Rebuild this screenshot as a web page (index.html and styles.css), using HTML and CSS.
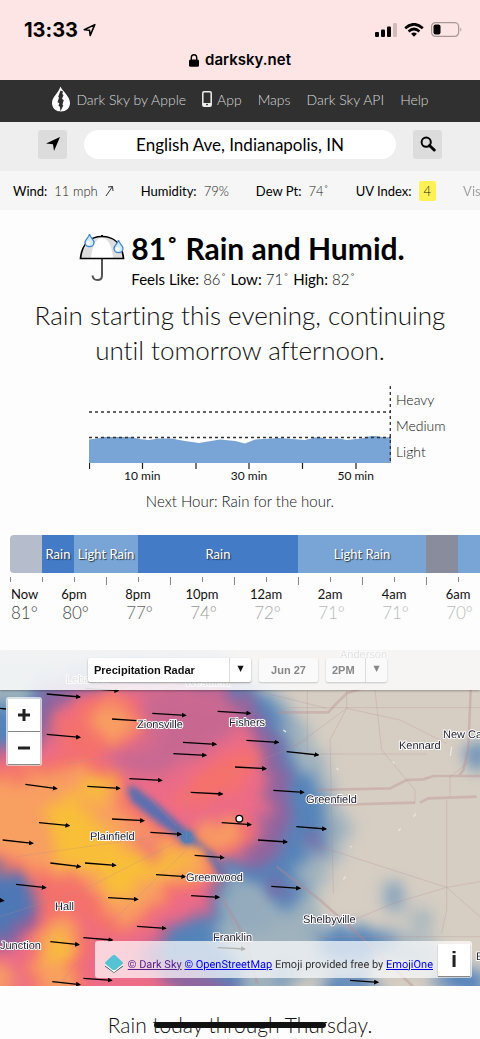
FILE: index.html
```html
<!DOCTYPE html>
<html lang="en">
<head>
<meta charset="utf-8">
<meta name="viewport" content="width=device-width, initial-scale=1">
<title>Dark Sky - English Ave, Indianapolis, IN</title>
<link rel="stylesheet" href="styles.css">
</head>
<body>
<header class="phone">
  <div class="status">
    <div class="clock"><span>13:33</span>
      <svg width="13" height="14" viewBox="0 0 13 14"><path d="M1.2 6.7 11.8 1.6 7.2 12.4 6.5 7.2Z" fill="none" stroke="#000" stroke-width="1.6" stroke-linejoin="round"/></svg>
    </div>
    <div class="signals">
      <svg width="22" height="14" viewBox="0 0 22 14"><rect y="9" width="4" height="5" rx="1"/><rect x="6" y="6.500" width="4" height="7.500" rx="1"/><rect x="12" y="3.500" width="4" height="10.500" rx="1"/><rect x="18" width="4" height="14" rx="1" fill="#d0bcbc"/></svg>
      <svg width="20" height="14" viewBox="0 0 20 14"><g fill="none" stroke="#000" stroke-width="2.700"><path d="M1.200 5.200Q10-2.600 18.800 5.200"/><path d="M4.600 8.400Q10 3.600 15.400 8.400"/></g><path d="M7.100 10.700Q10 8.400 12.900 10.700L10 13.700Z"/></svg>
      <svg width="31" height="15" viewBox="0 0 31 15"><rect x=".6" y=".6" width="27" height="13.800" rx="4" fill="none" stroke="#a79898" stroke-width="1.200"/><rect x="2.500" y="2.500" width="7" height="10" rx="2"/><path d="M29.300 5.200q2 2.300 0 4.600Z" fill="#a79898"/></svg>
    </div>
  </div>
  <div class="address">
    <svg width="10" height="13" viewBox="0 0 10 13"><rect y="5.500" width="10" height="7.300" rx="1.500"/><path d="M2.300 6V3.700a2.700 2.900 0 0 1 5.400 0V6" fill="none" stroke="#000" stroke-width="1.400"/></svg>
    <span>darksky.net</span>
  </div>
</header>

<nav class="nav">
  <a href="#home"><svg width="20" height="26" viewBox="0 0 20 26"><path d="M9.500.5C11 5 19 10 19 17c0 5-4 8.500-9 8.500S1 22 1 17C1 11 7.500 7 9.500.500Z" fill="#fff"/><path d="M9.500 4.500 12 5.500 11.300 8 12.500 9 11 13 12.800 14 11.500 18.500 12.300 19.500 9.500 25.200 8.800 20.500 7.500 20 8.300 17 6.500 16.300 8 11.500 7.200 10.700Z" fill="#303030"/></svg>Dark Sky by Apple</a>
  <a href="#app"><svg width="10" height="16" viewBox="0 0 10 16"><rect x=".8" y=".8" width="8.400" height="14.400" rx="1.200" fill="none" stroke="#eee" stroke-width="1.500"/><path d="M1 12h8v3H1z" fill="#eee"/><circle cx="5" cy="13.600" r=".8"/></svg>App</a>
  <a href="#maps">Maps</a>
  <a href="#api">Dark Sky API</a>
  <a href="#help">Help</a>
</nav>

<form class="search">
  <button type="button" class="square" aria-label="Use my location"><svg width="16" height="16" viewBox="0 0 16 16"><path d="M1 7.500 15 1 9 15 8 8.200Z"/></svg></button>
  <input class="place" type="text" aria-label="Location" value="English Ave, Indianapolis, IN">
  <button type="button" class="square" aria-label="Search"><svg width="16" height="16" viewBox="0 0 16 16"><circle cx="6.200" cy="6.200" r="4.600" fill="none" stroke="#000" stroke-width="2"/><path d="m9.500 9.500 4.700 4.500" stroke="#000" stroke-width="3" stroke-linecap="round"/></svg></button>
</form>

<div class="conditions">
  <div><b>Wind:</b><span>11 mph</span><svg width="9" height="12" viewBox="0 0 9 12"><path d="M1 11 7.500 1.500M3 2l4.500-.5L8 6" fill="none" stroke="#333"/></svg></div>
  <div><b>Humidity:</b><span>79%</span></div>
  <div><b>Dew Pt:</b><span>74˚</span></div>
  <div><b>UV Index:</b><span class="uv">4</span></div>
  <div class="faded"><b>Visibility:</b></div>
</div>

<main>
  <section class="current">
    <svg width="46" height="50" viewBox="0 0 46 50">
      <path d="M23 25v17.500q0 4.500-4.500 4.500T13.500 42.500" fill="none" stroke="#555" stroke-width="2"/>
      <path d="M1.500 25.500C3 11 11 3.500 23 3.500s20 7.500 21.500 22Z" fill="#dedede"/>
      <path d="M12 25.500C13 13 17 5 23 5s10 8 11 20.500Z" fill="#fff"/>
      <path d="M1.500 25.500C3 11 11 3.500 23 3.500s20 7.500 21.500 22Z" fill="none" stroke="#000" stroke-width="1.700"/>
      <path d="M23 4V2" stroke="#000" stroke-width="2"/>
      <g fill="#d4eafc" stroke="#3d86cc" stroke-width="1.300"><path d="M10.500 1c.7 4 4.500 5.500 4.500 8.500a4.500 4.200 0 0 1-9 0C6 6.500 9.800 5 10.500 1Z"/><path d="M39.500 7c.7 4 4.500 5.500 4.500 8.500a4.500 4.200 0 0 1-9 0c0-3 3.800-4.500 4.500-8.500Z"/></g>
      <g fill="#fff"><circle cx="9.500" cy="10" r="2"/><circle cx="38.500" cy="16" r="2"/></g>
    </svg>
    <div>
      <h1>81˚ Rain and Humid.</h1>
      <p class="feels"><span><b>Feels Like:</b> 86˚</span><span><b>Low:</b> 71˚</span><span><b>High:</b> 82˚</span></p>
    </div>
  </section>
  <p class="outlook">Rain starting this evening, continuing until tomorrow afternoon.</p>

  <section class="hour">
    <div class="chart">
      <svg class="plot" viewBox="0 0 302 84" preserveAspectRatio="none">
        <path d="M0 77V53.500L8 52.500 14 51H42L50 53 60 54 70 52.500H82L96 55 110 57 122 55 131 53.500 146 55 156 57.500 166 53.500 190 52 216 54 226 51.500H232L238 53 250 52.500 258 54 272 52.500 282 50H287L296 51.500 302 51V77Z" fill="#78a4d6"/>
        <g fill="none" stroke="#333" stroke-width="1.300" stroke-dasharray="3 3"><path d="M0 26h302M0 51.500h302"/><path d="M301.300 0v77"/></g>
        <path d="M.5 77v6M53.500 77v6M107 77v6M160 77v6M213.500 77v6M267 77v6" stroke="#222" stroke-width="1.200"/>
      </svg>
      <div class="levels"><span>Heavy</span><span>Medium</span><span>Light</span></div>
      <div class="minutes"><span>10 min</span><span>30 min</span><span>50 min</span></div>
    </div>
    <p class="next">Next Hour: Rain for the hour.</p>
  </section>

  <section class="timeline">
    <div class="bands">
      <span class="cloudy"></span><span class="rain">Rain</span><span class="light two">Light Rain</span><span class="rain five">Rain</span><span class="light four">Light Rain</span><span class="overcast"></span><span class="light two"></span>
    </div>
    <div class="ticks"><i></i><i></i><i></i><i class="long"></i><i></i><i class="long"></i><i></i><i class="long"></i><i></i><i class="long"></i><i></i><i class="long"></i><i></i><i class="long"></i><i></i></div>
    <div class="hours">
      <div class="now"><b>Now</b><span class="t81">81°</span></div>
      <div><b>6pm</b><span class="t81">80°</span></div>
      <div><b>8pm</b><span class="t77">77°</span></div>
      <div><b>10pm</b><span class="t74">74°</span></div>
      <div><b>12am</b><span class="t72">72°</span></div>
      <div><b>2am</b><span class="t71">71°</span></div>
      <div><b>4am</b><span class="t71">71°</span></div>
      <div><b>6am</b><span class="t71">70°</span></div>
    </div>
  </section>

  <section class="map">
    <svg class="canvas" viewBox="0 0 480 336" preserveAspectRatio="xMidYMid slice">
      <defs>
        <filter id="haze" x="-20%" y="-20%" width="140%" height="140%" color-interpolation-filters="sRGB"><feTurbulence type="fractalNoise" baseFrequency=".03" numOctaves="4" seed="4" result="n"/><feDisplacementMap in="SourceGraphic" in2="n" scale="80" xChannelSelector="R" yChannelSelector="G"/><feGaussianBlur stdDeviation="22"/></filter>
        <filter id="soft" x="-20%" y="-20%" width="140%" height="140%" color-interpolation-filters="sRGB"><feTurbulence type="fractalNoise" baseFrequency=".025" numOctaves="4" seed="9" result="n"/><feDisplacementMap in="SourceGraphic" in2="n" scale="110" xChannelSelector="R" yChannelSelector="G"/><feGaussianBlur stdDeviation="20"/></filter>
        <filter id="fine" x="-30%" y="-30%" width="160%" height="160%" color-interpolation-filters="sRGB"><feGaussianBlur stdDeviation="10"/></filter>
        <marker id="tip" viewBox="0 0 14 14" refX="11" refY="7" markerWidth="15" markerHeight="15" markerUnits="userSpaceOnUse" orient="auto"><path d="M0 0 14 7 0 14Z"/></marker>
      </defs>
      <rect width="480" height="336" fill="#d6cec3"/>
      <g transform="translate(0 -10) scale(.33333)">
        <g filter="url(#haze)" fill="#9fb2bd">
          <path d="M-80 20H640L800 130 900 230 970 350 1010 470 1060 570 1020 640 970 720 950 810 980 870 1180 870 1330 920 1300 990 1120 980 900 1020 800 1100H-80Z"/>
          <ellipse cx="1180" cy="775" rx="32" ry="55"/><ellipse cx="1265" cy="835" rx="30" ry="44"/><ellipse cx="1435" cy="345" rx="34" ry="44"/>
        </g>
        <g filter="url(#soft)" fill="#5584ba">
          <path d="M-80 190 60 200 110 130 300 90 640 70 760 150 830 200 860 270 880 360 930 410 970 490 990 620 930 640 870 690 920 780 850 820 770 740 690 690 680 800 640 890 720 960 720 1100H-80Z"/>
          <path d="M950 880 1040 865 1180 890 1160 940 1080 970 970 950ZM980 1000 1110 1000 1140 1070 960 1070ZM1330 960 1460 1000V1060H1320Z"/>
          <ellipse cx="1440" cy="340" rx="26" ry="28"/><circle cx="850" cy="1010" r="28"/><ellipse cx="1180" cy="775" rx="20" ry="34" opacity=".6"/>
        </g>
        <path filter="url(#haze)" fill="#91aabd" opacity=".85" d="M690 730 780 760 830 840 780 880 700 880 670 840Z"/>
        <g filter="url(#soft)">
          <path fill="#90659f" d="M-80 335 70 325 100 230 120 140 640 110 760 190 830 280 855 390 870 480 850 570 830 660 760 690 640 640 650 780 560 850 500 880 460 930 500 960 700 1030V1100H-80Z"/>
        </g>
        <g filter="url(#soft)">
          <path fill="#ed6c88" d="M-80 350 80 350 165 280 180 180 300 140 640 145 720 210 770 300 800 400 810 500 790 580 720 660 640 640 610 620 640 710 620 810 540 850 460 890 400 940 500 1020 530 1100H-80Z"/>
          <path fill="#905f9c" d="M-80 630 50 670 110 740 150 780 100 860 30 910-80 920Z"/>
        </g>
        <g filter="url(#soft)">
          <path fill="#4d78b6" d="M-80 660 20 670 80 735 110 780 70 840 0 890-80 900Z"/>
          <path fill="#90659f" opacity=".4" d="M430 160 620 150 740 220 700 290 600 350 480 420 420 400 300 340 320 320 440 330Z"/>
          <path fill="#905f9c" opacity=".8" d="M910 570 980 600 960 640 900 610ZM800 720 870 730 850 780 810 750Z"/>
          <path fill="#f5716b" d="M170 260 250 170 410 180 440 280 270 350 170 320ZM500 480 640 360 720 330 790 350 730 440 560 510ZM-80 400 100 370 260 350 370 420 420 510 560 590 730 540 760 610 640 650 650 710 520 770 440 840 330 900 230 800 140 830 100 720-80 640ZM90 860 190 790 260 870 260 1060 90 1060Z"/>
        </g>
        <g filter="url(#soft)">
          <path fill="#f89f62" d="M270 210 380 180 410 280 290 300ZM-80 440 80 400 250 390 330 430 370 520 500 595 600 600 620 700 500 740 450 830 340 850 290 780 250 720 110 690-80 620ZM110 880 190 810 240 880 210 960 220 1070 110 1070ZM590 560 700 550 720 600 640 630ZM-80 960 40 990 30 1080H-80Z"/>
        </g>
        <g filter="url(#soft)">
          <path fill="#f8c234" opacity=".9" d="M150 500 230 470 310 550 340 620 480 640 600 620 610 670 480 700 380 760 270 710 190 680 150 600ZM230 420 310 400 360 450 300 490ZM320 690 440 690 410 770 330 770ZM140 900 190 870 210 920 170 990Z"/>
          <path fill="#ee6d7d" opacity=".8" d="M400 590 490 600 470 650 410 640Z"/>
        </g>
        <g filter="url(#fine)"><path fill="#5a6fb0" d="M380 440 405 440 470 490 550 560 580 590 640 640 690 720 655 700 610 625 550 602 470 545 395 485Z"/><circle cx="561" cy="592" r="24" fill="#4d79b6"/></g>
        <circle cx="561" cy="592" r="18" fill="#4f80b6" opacity=".7"/>
        <g fill="none" stroke="#b58c90" stroke-width="3" opacity=".28">
          <path d="M760 150 980 205M922 150V350L870 300M1040 150V205L870 330M1040 205 990 300 1000 760M1040 205 1200 240 1340 310M860 203H1440M1125 150 1145 330 1245 450V490M960 342H1280M960 620 1340 742V810L1325 880M1440 725 1340 742 1180 790 1060 840M1340 742 1440 830M1350 470V410L1440 340M1340 480V742M950 890H1440M630 640 700 860 780 1040M200 370 330 350 530 560M580 610 330 850 180 1030M0 830 250 750 540 600M560 600V300M570 600 700 400 920 300M50 650 540 580"/>
        </g>
        <g fill="none" stroke="#bb888b" stroke-width="8" opacity=".35"><path d="M830 217 985 217 1000 200 1040 160 1100 140M1412 150 1405 330 1390 390 1375 410M950 450 1170 445 1220 420 1270 418 1300 408 1440 408M1000 495 1245 488M1260 488 1285 475 1430 470M830 680 960 780 1050 860 1240 1040M670 780 740 900 770 1030"/></g>
        <g stroke="#eae7e1" stroke-width="4"><path d="m1355 320-4 28M1010 384l5 6M1195 573l7-8M1030 718l7-9M1240 530l8-9M1178 366l5 4M850 270l8 6M1050 620h5"/></g>
        <g stroke="#000" stroke-width="4">
          <path marker-end="url(#tip)" d="M140 162 240 171"/><path marker-end="url(#tip)" d="M255 145 355 152"/><path d="M0 205 18 207M336 237 410 242"/><path marker-end="url(#tip)" d="M457 220 557 226"/><path marker-end="url(#tip)" d="M653 214 751 220"/><path marker-end="url(#tip)" d="M140 283 240 292"/><path marker-end="url(#tip)" d="M549 307 648 313"/><path marker-end="url(#tip)" d="M520 341 618 346"/><path marker-end="url(#tip)" d="M739 301 835 307"/><path marker-end="url(#tip)" d="M860 335 955 345"/><path marker-end="url(#tip)" d="M705 381 798 386"/><path marker-end="url(#tip)" d="M388 416 485 421"/><path marker-end="url(#tip)" d="M76 433 170 446"/><path marker-end="url(#tip)" d="M262 439 359 445"/><path marker-end="url(#tip)" d="M572 457 667 462"/><path marker-end="url(#tip)" d="M820 451 911 457"/><path marker-end="url(#tip)" d="M117 548 208 557"/><path marker-end="url(#tip)" d="M336 537 432 542"/><path marker-end="url(#tip)" d="M451 577 543 583"/><path marker-end="url(#tip)" d="M665 548 753 554"/><path marker-end="url(#tip)" d="M889 560 978 567"/><path marker-end="url(#tip)" d="M8 600 99 610"/><path marker-end="url(#tip)" d="M774 600 861 606"/><path marker-end="url(#tip)" d="M584 646 671 653"/><path marker-end="url(#tip)" d="M151 669 241 680"/><path marker-end="url(#tip)" d="M255 669 347 676"/><path marker-end="url(#tip)" d="M468 704 556 710"/><path marker-end="url(#tip)" d="M48 733 137 743"/><path marker-end="url(#tip)" d="M814 739 900 745"/><path marker-end="url(#tip)" d="M573 767 657 772"/><path marker-end="url(#tip)" d="M324 773 413 778"/><path marker-end="url(#tip)" d="M-60 775 11 782"/><path marker-end="url(#tip)" d="M411 859 497 865"/><path marker-end="url(#tip)" d="M151 905 237 914"/><path marker-end="url(#tip)" d="M250 893 337 900"/><path marker-end="url(#tip)" d="M653 923 735 927"/><path marker-end="url(#tip)" d="M250 1015 335 1021"/><path marker-end="url(#tip)" d="M157 1025 240 1034"/><path marker-end="url(#tip)" d="M1050 1021 1134 1027"/>
        </g>
        <circle cx="718" cy="536" r="10" fill="#fff" stroke="#000" stroke-width="4"/>
      </g>
      <g class="towns">
        <text x="66" y="33">Lebanon</text><text x="185" y="36">Westfield</text><text x="340" y="8">Anderson</text>
        <text x="137" y="78">Zionsville</text><text x="229" y="76">Fishers</text><text x="399" y="99">Kennard</text><text x="443" y="88">New Castle</text><text x="306" y="153">Greenfield</text><text x="90" y="190">Plainfield</text><text x="186" y="231">Greenwood</text><text x="55" y="260">Hall</text><text x="303" y="273">Shelbyville</text><text x="213" y="291">Franklin</text><text x="0" y="299">Junction</text><text x="476" y="310">East</text>
      </g>
    </svg>
    <div class="toolbar">
      <label class="pick layer"><select aria-label="Map layer"><option>Precipitation Radar</option></select></label>
      <button type="button" class="date">Jun 27</button>
      <label class="pick time"><select aria-label="Time"><option>2PM</option></select></label>
    </div>
    <div class="zoom"><button type="button" aria-label="Zoom in"><svg width="12" height="12" viewBox="0 0 12 12"><path d="M6 0v12M0 6h12" stroke="#222" stroke-width="3"/></svg></button><button type="button" aria-label="Zoom out"><svg width="12" height="12" viewBox="0 0 12 12"><path d="M0 6h12" stroke="#222" stroke-width="3"/></svg></button></div>
    <div class="credits">
      <svg width="18" height="18" viewBox="0 0 18 18"><path d="M0 9.500 9 17.500l9-8v2L9 18 0 11.500Z" fill="#2b5365"/><path d="M0 9v1.500L9 17l9-6.500V9L9 15Z" fill="#fff"/><path d="M9 0Q10 0 11 1l6.500 6q.800 1 0 2L11 14.500q-2 1.200-4 0L.500 9q-.800-1 0-2L7 1Q8 0 9 0Z" fill="#55c3d3"/></svg>
      <span><a class="seen" href="#darksky">© Dark Sky</a> <a href="#osm">© OpenStreetMap</a> Emoji provided free by <a href="#emoji">EmojiOne</a></span>
      <button type="button" aria-label="Map information">i</button>
    </div>
  </section>

  <p class="week">Rain today through Thursday.</p>
</main>
<div class="home-bar"></div>
</body>
</html>
```

FILE: styles.css
```css
* { box-sizing: border-box; }
body { margin: 0; background: #fdfdfd; color: #111; font-family: Lato, sans-serif; font-variant-ligatures: none; overflow-x: hidden; }
h1, p { margin: 0; }
svg { flex: none; display: block; }
button, input, select { font: inherit; color: inherit; border: 0; padding: 0; margin: 0; }
a { color: inherit; text-decoration: none; }

.phone { height: 80px; background: #fde5e5; color: #000; font-family: Inter, sans-serif; }
.status { display: flex; justify-content: space-between; align-items: center; padding: 19px 18px 0 24px; height: 40px; }
.clock, .signals { display: flex; align-items: center; }
.clock { gap: 5px; font-size: 20px; font-weight: 700; line-height: 20px; }
.signals { gap: 7px; }
.address { display: flex; justify-content: center; align-items: center; gap: 6px; padding-top: 10px; font-size: 15px; line-height: 20px; font-weight: 600; }

.nav { display: flex; align-items: center; justify-content: center; gap: 16px; height: 42px; padding-bottom: 4px; background: #303030; color: #d8d8d8; font-size: 14px; font-weight: 300; white-space: nowrap; }
.nav a { display: flex; align-items: center; gap: 5px; }

.search { display: flex; align-items: center; gap: 17px; height: 49px; padding: 0 38px 5px; background: #eee; }
.square { display: grid; place-items: center; flex: none; width: 29px; height: 29px; border-radius: 3px; background: #dcdcdc; }
.place { flex: 1; min-width: 0; height: 29px; border-radius: 15px; background: #fff; font-size: 17px; text-align: center; color: #000; }

.conditions { display: flex; align-items: center; gap: 27px; height: 39px; padding-left: 13px; background: #f6f6f6; font-size: 13px; white-space: nowrap; overflow: hidden; }
.conditions div { display: flex; align-items: center; gap: 7px; }
.conditions b, .feels b { font-weight: 400; color: #000; }
.conditions span { font-weight: 300; color: #222; }
.conditions .uv { padding: 0 5px; line-height: 20px; border-radius: 2px; background: #fff154; }
.conditions .faded { opacity: .35; }

.current { display: flex; justify-content: center; gap: 6px; padding: 23px 0 0 4px; }
h1 { font-size: 30px; line-height: 30px; font-weight: 700; color: #000; }
.feels { display: flex; gap: 4px; margin-top: 6px; font-size: 15px; line-height: 20px; font-weight: 300; }
.outlook { padding: 9px 24px 0; text-align: center; font-size: 26px; line-height: 35px; font-weight: 300; }

.hour { padding-top: 18px; }
.chart { display: grid; grid-template-columns: 1fr 50px; column-gap: 5px; padding: 0 34px 0 89px; }
.plot { width: 100%; height: 84px; }
.levels { display: grid; grid-template-rows: repeat(3, 26px); align-content: start; align-items: center; font-size: 14px; font-weight: 300; }
.minutes { display: grid; grid-template-columns: repeat(3, 1fr); margin-right: -18px; text-align: center; font-size: 12px; line-height: 12px; }
.next { padding-top: 9px; text-align: center; font-size: 15px; line-height: 20px; font-weight: 300; }

.timeline { padding: 24px 0 0 10px; overflow: hidden; }
.bands { display: grid; grid-auto-flow: column; grid-auto-columns: 32px; height: 38px; border-radius: 4px 0 0 4px; color: #fff; font-size: 13px; text-shadow: 1px 1px 1px #234; overflow: hidden; }
.bands span { display: grid; place-items: center; white-space: nowrap; }
.bands .cloudy { background: #b5bccc; }
.bands .overcast { background: #898c9c; }
.bands .rain { background: #437bc7; }
.bands .light { background: #78a4d6; }
.bands .two { grid-column: span 2; }
.bands .four { grid-column: span 4; }
.bands .five { grid-column: span 5; }
.ticks { display: flex; padding-top: 4px; height: 12px; }
.ticks i { flex: none; width: 32px; height: 5px; border-left: 1px solid #888; }
.ticks .long { height: 8px; }
.hours { display: grid; grid-template-columns: 32px repeat(7, 64px); font-size: 13px; line-height: 18px; text-align: center; }
.hours b, .hours span { display: block; }
.hours b { font-weight: 400; }
.hours span { font-size: 17px; line-height: 20px; font-weight: 300; padding-left: 3px; }
.hours .now { text-align: left; padding-left: 1px; }
.hours .now span { padding: 0; }
.t81 { color: #444; } .t77 { color: #666; } .t74 { color: #999; } .t72 { color: #aaa; } .t71 { color: #bbb; }

.map { position: relative; margin-top: 27px; font-family: "Liberation Sans", Arial, sans-serif; text-rendering: geometricPrecision; overflow: hidden; }
.canvas { width: 100%; height: auto; min-height: 336px; }
.towns { font-size: 11px; fill: #223; stroke: #fff; stroke-width: 2px; stroke-linejoin: round; paint-order: stroke; }
.toolbar { position: absolute; inset: 0 0 auto; display: flex; justify-content: center; gap: 8px; height: 40px; padding: 8px 5px 8px 0; background: rgba(250, 250, 250, .88); box-shadow: 0 1px 2px rgba(0, 0, 0, .3); font-size: 11px; font-weight: 700; }
.pick { position: relative; }
.pick::after { content: "▼"; position: absolute; top: 0; right: 0; width: 21px; height: 24px; border-left: 1px solid #ddd; font: 8px/22px "DejaVu Sans", sans-serif; text-align: center; pointer-events: none; }
.pick select, .date { appearance: none; height: 24px; border-radius: 2px; background: #fff; box-shadow: 0 1px 2px rgba(0, 0, 0, .35); }
.layer select { width: 163px; padding-left: 6px; }
.time select { width: 61px; padding-left: 6px; }
.date { width: 59px; }
.date, .time { color: #888; }
.date, .time select { background: #fafafa; box-shadow: 0 1px 2px rgba(0, 0, 0, .2); }
.zoom { position: absolute; left: 6px; top: 47px; display: grid; gap: 1px; padding: 2px; border-radius: 3px; background: rgba(255, 255, 255, .65); }
.zoom button { display: grid; place-items: center; width: 32px; height: 32px; background: #fff; box-shadow: 0 1px 1px #888; }
.credits { position: absolute; right: 8px; bottom: 8px; display: flex; align-items: center; gap: 5px; height: 37px; padding: 2px 2px 2px 10px; border-radius: 3px; background: rgba(255, 255, 255, .7); font-family: Roboto, Arial, sans-serif; font-size: 11px; color: #333; white-space: nowrap; }
.credits span { padding-top: 9px; }
.credits svg { margin-top: 9px; }
.credits a { color: #00e; text-decoration: underline; }
.credits .seen { color: #551a8b; }
.credits button { width: 32px; height: 32px; background: #fff; box-shadow: 0 1px 1px #888; color: #222; font: 700 22px/32px "Liberation Sans", Arial, sans-serif; }

.week { padding: 24px 0 0; text-align: center; font-size: 21px; line-height: 29px; font-weight: 300; }
.home-bar { position: fixed; left: 32%; right: 32%; bottom: 11px; height: 6px; border-radius: 3px; background: #111; }
```
